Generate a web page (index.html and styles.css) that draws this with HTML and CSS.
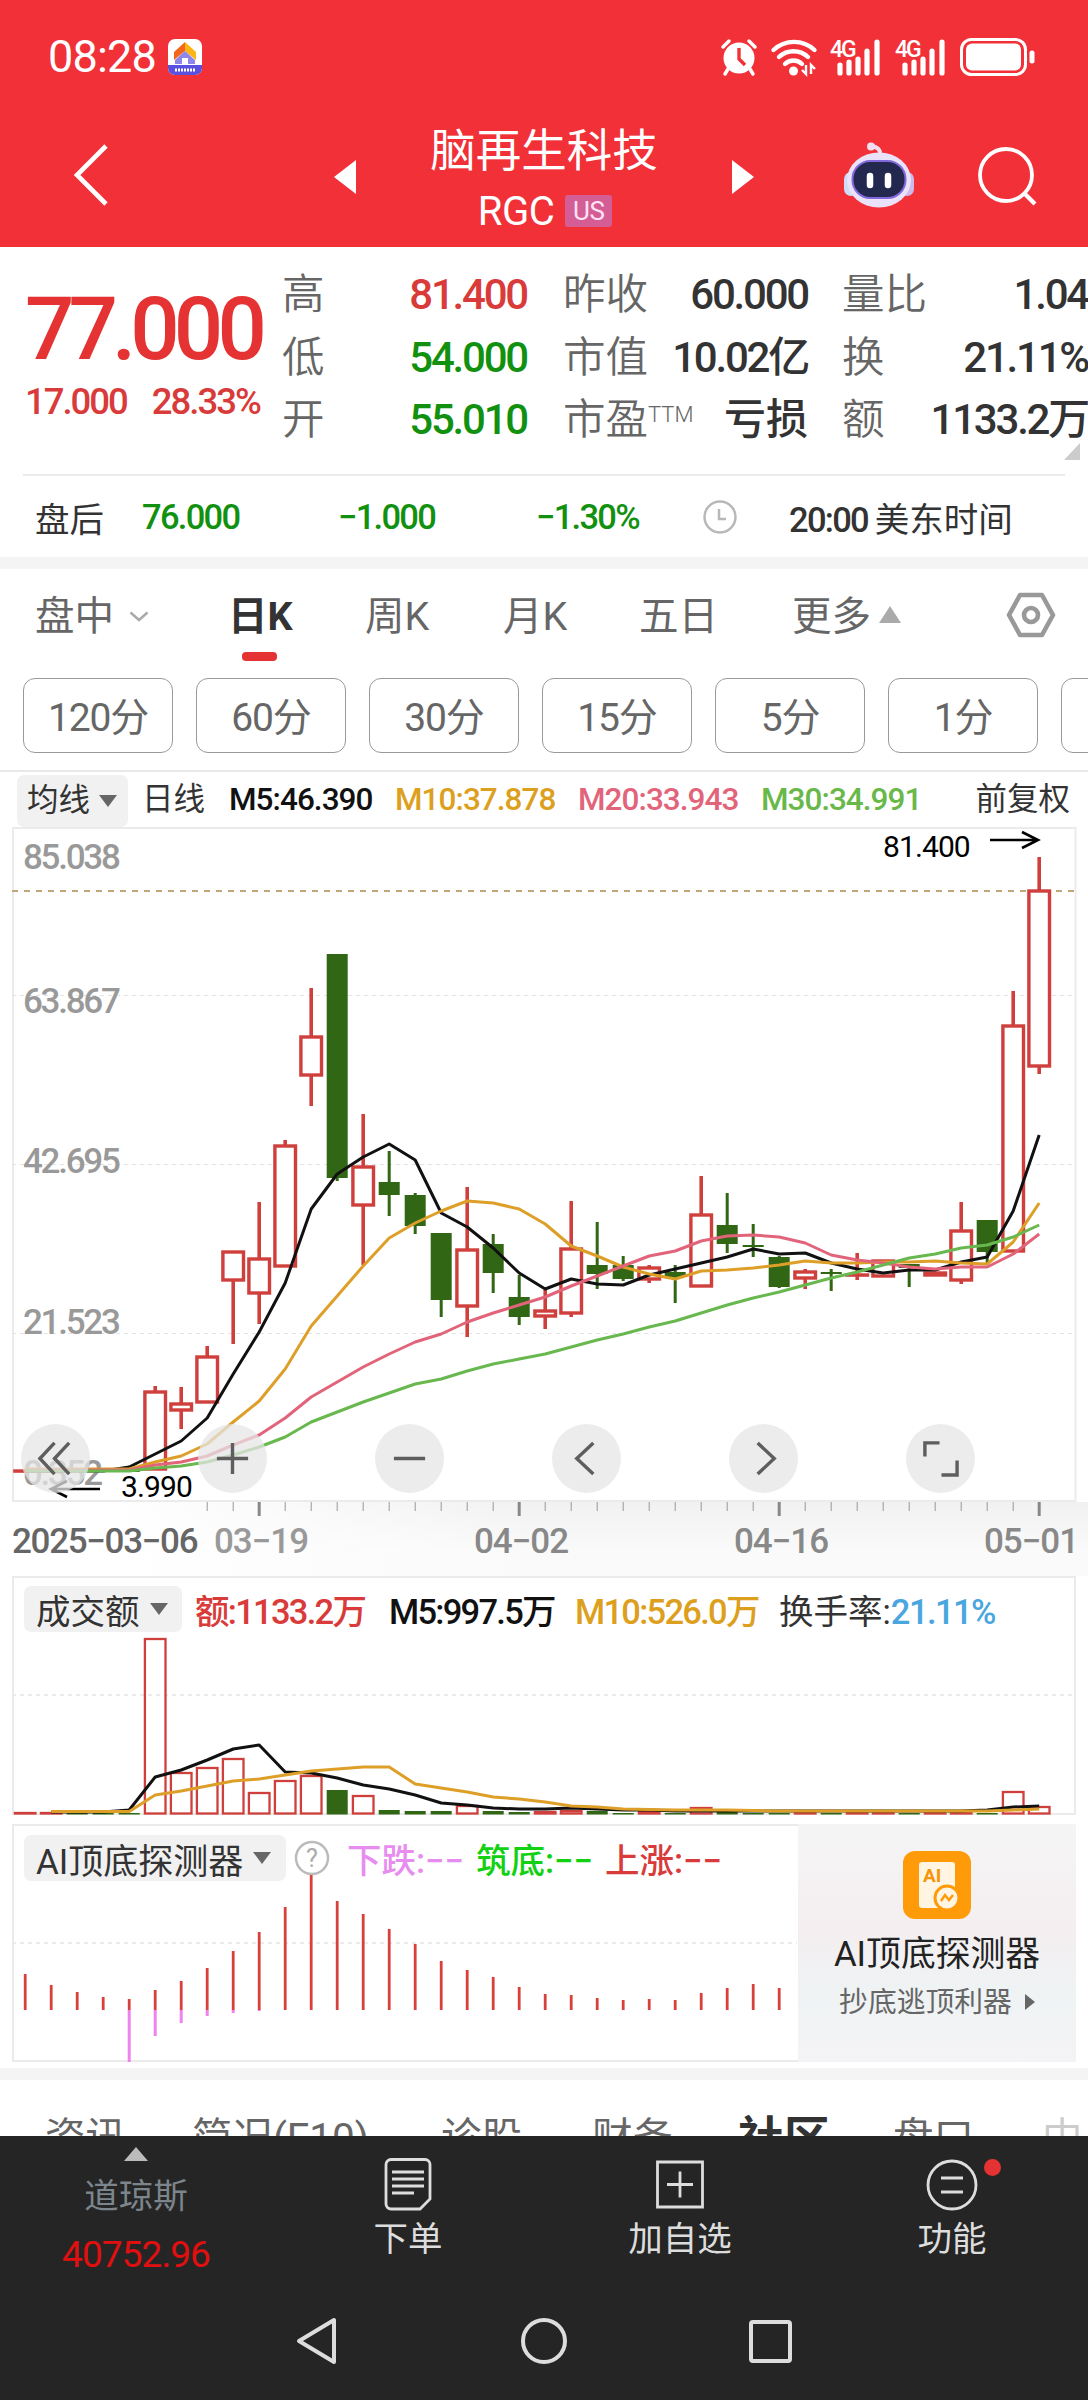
FILE: index.html
```
<!DOCTYPE html>
<html lang="zh-CN">

<head>
    <meta charset="UTF-8">
    <meta name="viewport" content="width=device-width, initial-scale=1.0">
    <title>脑再生科技 RGC</title>
    <link rel="stylesheet" href="styles.css">
</head>

<body>
    <div class="phone">
        <header class="header">
            <div class="status">
                <span class="time">08:28</span>
                <svg class="app-icon" width="34" height="36" viewBox="0 0 34 36">
                    <rect width="34" height="36" rx="7" fill="#fff"/>
                    <path d="M0 26h34v3a7 7 0 0 1-7 7H7a7 7 0 0 1-7-7z" fill="#5a50e0"/>
                    <path d="M6 13 17 3v9L6 21z" fill="#f4661b"/>
                    <path d="M17 3l11 10v8l-11-9z" fill="#fdb515"/>
                    <path d="M7 21l10-9 10 9v4h-7v-5h-6v5H7z" fill="#8f86ea"/>
                    <path d="M14 25v-6h6v6" fill="#fff"/>
                    <path d="M7 31h20" stroke="#fff" stroke-width="3" stroke-dasharray="2 1"/>
                </svg>
                <div class="status-icons">
                    <svg width="38" height="38" viewBox="0 0 38 38">
                        <circle cx="19" cy="20" r="15.5" fill="#fff"/>
                        <path d="M19 10v11l6 6" fill="none" stroke="#f13038" stroke-width="3.4"/>
                        <path d="M3 9l6-6M35 9l-6-6M8 31l-3 5M30 31l3 5" stroke="#fff" stroke-width="3.5" stroke-linecap="round"/>
                    </svg>
                    <svg width="46" height="38" viewBox="0 0 46 38">
                        <g fill="none" stroke="#fff" stroke-width="4.4" stroke-linecap="round">
                            <path d="M2.5 12a30 30 0 0 1 41 0"/>
                            <path d="M8 19a21 21 0 0 1 29 0"/>
                            <path d="M14 26a12 12 0 0 1 17 0"/>
                        </g>
                        <circle cx="22.5" cy="33" r="4.5" fill="#fff"/>
                        <path d="M35 27v9l-4-4M40 36v-9l4 4" fill="none" stroke="#fff" stroke-width="2.4"/>
                    </svg>
                    <svg class="signal" width="52" height="38" viewBox="0 0 52 38">
                        <text x="0" y="19">4G</text>
                        <path d="M10 35v-8M19 35V24M28 35V21M37 35V13M47 35V4" stroke="#fff" stroke-width="5.2" stroke-linecap="round"/>
                    </svg>
                    <svg class="signal" width="52" height="38" viewBox="0 0 52 38">
                        <text x="0" y="19">4G</text>
                        <path d="M10 35v-8M19 35V24M28 35V21M37 35V13M47 35V4" stroke="#fff" stroke-width="5.2" stroke-linecap="round"/>
                    </svg>
                    <svg width="76" height="38" viewBox="0 0 76 38">
                        <rect x="1.5" y="1.5" width="64" height="35" rx="10" fill="none" stroke="#fff" stroke-width="3"/>
                        <rect x="6" y="5.5" width="55" height="27" rx="6" fill="#fff"/>
                        <path d="M72 15v8" stroke="#fff" stroke-width="5" stroke-linecap="round"/>
                    </svg>
                </div>
            </div>
            <div class="title-bar">
                <svg class="back" width="34" height="62" viewBox="0 0 34 62">
                    <path d="M32 2 3 31l29 29" fill="none" stroke="#fff" stroke-width="4.6"/>
                </svg>
                <svg class="prev" width="22" height="34"><path d="M22 0v34L0 17z" fill="#fff"/></svg>
                <div class="stock">
                    <div class="stock-name">脑再生科技</div>
                    <div class="stock-code">RGC<span class="market">US</span></div>
                </div>
                <svg class="next" width="22" height="34"><path d="M0 0v34l22-17z" fill="#fff"/></svg>
                <svg class="robot" width="70" height="66" viewBox="0 0 70 66">
                    <path d="M36 14c1-6-2-9-9-10" fill="none" stroke="#f1dff0" stroke-width="4"/>
                    <circle cx="27" cy="4.5" r="4" fill="#f1dff0"/>
                    <rect x="0" y="30" width="14" height="24" rx="7" fill="#cfdcf8"/>
                    <rect x="56" y="30" width="14" height="24" rx="7" fill="#cdb9ea"/>
                    <ellipse cx="35" cy="38" rx="32" ry="27.5" fill="#e9e2f8"/>
                    <rect x="8.5" y="19" width="53" height="37" rx="18" fill="#23284f" stroke="#8268dc" stroke-width="2"/>
                    <path d="M26 34v9M44 34v9" stroke="#fff" stroke-width="6.5" stroke-linecap="round"/>
                </svg>
                <svg class="search" width="60" height="60" viewBox="0 0 60 60">
                    <circle cx="28" cy="28" r="26" fill="none" stroke="#fff" stroke-width="3.8"/>
                    <path d="M46 46l11 11" stroke="#fff" stroke-width="4.2"/>
                </svg>
            </div>
        </header>

        <section class="quote">
            <div class="price">
                <div class="price-now">77.000</div>
                <div class="price-change"><span>17.000</span><span>28.33%</span></div>
            </div>
            <dl class="facts">
                <dt>高</dt><dd class="up">81.400</dd>
                <dt>昨收</dt><dd>60.000</dd>
                <dt>量比</dt><dd>1.04</dd>
                <dt>低</dt><dd class="down">54.000</dd>
                <dt>市值</dt><dd>10.02亿</dd>
                <dt>换</dt><dd>21.11%</dd>
                <dt>开</dt><dd class="down">55.010</dd>
                <dt>市盈<sup>TTM</sup></dt><dd class="loss">亏损</dd>
                <dt>额</dt><dd>1133.2万</dd>
            </dl>
            <i class="corner"></i>
        </section>

        <section class="after">
            <span class="cjk">盘后</span>
            <span class="down">76.000</span>
            <span class="down">−1.000</span>
            <span class="down">−1.30%</span>
            <svg width="34" height="34" viewBox="0 0 34 34" fill="none" stroke="#b8b8b8" stroke-width="2.5">
                <circle cx="17" cy="17" r="15.5"/>
                <path d="M16 9v10h7"/>
            </svg>
            <span>20:00 <span class="cjk">美东时间</span></span>
        </section>
        <div class="band"></div>

        <nav class="tabs">
            <span>盘中<svg class="chev" width="20" height="11" viewBox="0 0 20 11"><path d="M1.5 1.5 10 9l8.5-7.5" fill="none" stroke="#aaa" stroke-width="2.5"/></svg></span>
            <span class="active">日K</span>
            <span>周K</span>
            <span>月K</span>
            <span>五日</span>
            <span>更多<svg class="more" width="22" height="17"><path d="M11 0l11 17H0z" fill="#aaa"/></svg></span>
            <svg width="50" height="46" viewBox="0 0 50 46" fill="none" stroke="#999" stroke-width="4.6">
                <path d="M14 3h22l11 20-11 20H14L3 23z" stroke-linejoin="round"/>
                <circle cx="25" cy="23" r="7"/>
            </svg>
        </nav>
        <div class="periods">
            <button>120分</button>
            <button>60分</button>
            <button>30分</button>
            <button>15分</button>
            <button>5分</button>
            <button>1分</button>
            <button></button>
        </div>

        <div class="ma-row">
            <span class="select">均线<i></i></span>
            <span class="ma-day">日线</span>
            <span class="black">M5:46.390</span>
            <span class="gold">M10:37.878</span>
            <span class="pink">M20:33.943</span>
            <span class="green">M30:34.991</span>
            <span class="adjust">前复权</span>
        </div>

        <div class="kline">
            <svg id="kline" width="1088" height="675" viewBox="0 827 1088 675"></svg>
            <div class="tools">
                <button><svg viewBox="0 0 40 40"><path d="M19 4 4 20l15 16M34 4 19 20l15 16"/></svg></button>
                <button><svg viewBox="0 0 40 40"><path d="M4 20h32M20 4v32"/></svg></button>
                <button><svg viewBox="0 0 40 40"><path d="M4 20h32"/></svg></button>
                <button><svg viewBox="0 0 40 40"><path d="M27 4 10 20l17 16"/></svg></button>
                <button><svg viewBox="0 0 40 40"><path d="M14 4l17 16-17 16"/></svg></button>
                <button><svg viewBox="0 0 40 40"><path d="M4 18V4h15M21 37h16V22"/></svg></button>
            </div>
        </div>
        <svg id="axis" class="axis" width="1088" height="74" viewBox="0 1502 1088 74"></svg>

        <section class="panel volume">
            <div class="panel-head">
                <span class="select">成交额<i></i></span>
                <span class="red">额:1133.2万</span>
                <span class="black">M5:997.5万</span>
                <span class="gold">M10:526.0万</span>
                <span class="turnover">换手率:<span class="blue">21.11%</span></span>
            </div>
            <svg id="volume" width="1064" height="178" viewBox="12 1637 1064 178"></svg>
        </section>

        <section class="panel detector">
            <div class="detector-main">
                <div class="panel-head">
                    <span class="select">AI顶底探测器<i></i></span>
                    <svg class="help" width="36" height="36" viewBox="0 0 36 36">
                        <circle cx="18" cy="18" r="16" fill="none" stroke="#bbb" stroke-width="2.5"/>
                        <text x="18" y="27" text-anchor="middle">?</text>
                    </svg>
                    <span class="magenta">下跌:−−</span>
                    <span class="lime">筑底:−−</span>
                    <span class="red">上涨:−−</span>
                </div>
                <svg id="detector" width="785" height="176" viewBox="12 1885 785 176"></svg>
            </div>
            <div class="promo">
                <svg width="68" height="68" viewBox="0 0 68 68">
                    <rect width="68" height="68" rx="12" fill="#ff9a08"/>
                    <path d="M19 11h30a3 3 0 0 1 3 3v43H19a3 3 0 0 1-3-3V14a3 3 0 0 1 3-3z" fill="#fff5e2"/>
                    <text x="20" y="31">AI</text>
                    <circle cx="44" cy="47" r="12" fill="#fff5e2" stroke="#ff9a08" stroke-width="3"/>
                    <path d="M38 50l4-6 4 5 4-5" fill="none" stroke="#ff9a08" stroke-width="2.5"/>
                </svg>
                <div class="promo-title">AI顶底探测器</div>
                <div class="promo-sub">抄底逃顶利器<i></i></div>
            </div>
        </section>
        <div class="band"></div>

        <nav class="info-tabs">
            <span>资讯</span>
            <span>简况(F10)</span>
            <span>诊股</span>
            <span>财务</span>
            <span class="active">社区</span>
            <span>盘口</span>
            <span class="faded">中</span>
        </nav>

        <footer class="bottom">
            <div class="index">
                <svg width="24" height="14"><path d="M12 0l12 14H0z" fill="#bbb"/></svg>
                <div class="index-name">道琼斯</div>
                <div class="index-value">40752.96</div>
            </div>
            <div class="action">
                <svg width="56" height="56" viewBox="0 0 56 56">
                    <path d="M11 3.5h34a5 5 0 0 1 5 5V43L40 53H11a5 5 0 0 1-5-5V8.5a5 5 0 0 1 5-5z"/>
                    <path d="M12 16h32M12 23h32M12 30h32M12 37h22"/>
                </svg>
                <div>下单</div>
            </div>
            <div class="action">
                <svg width="56" height="56" viewBox="0 0 56 56">
                    <path d="M5.5 6h45v45h-45zM15 28.5h26M28 15.5v26"/>
                </svg>
                <div>加自选</div>
            </div>
            <div class="action">
                <svg width="56" height="56" viewBox="0 0 56 56">
                    <circle cx="28" cy="29" r="24"/>
                    <path d="M17 22h22M17 36h22"/>
                </svg>
                <div>功能</div>
                <i class="dot"></i>
            </div>
        </footer>
        <div class="sys-nav">
            <svg width="48" height="48" viewBox="0 0 48 48"><path d="M40 3v42L5 24z"/></svg>
            <svg width="48" height="48" viewBox="0 0 48 48"><circle cx="24" cy="24" r="21"/></svg>
            <svg width="48" height="48" viewBox="0 0 48 48"><rect x="5" y="5" width="39" height="39" rx="2"/></svg>
        </div>
    </div>

    <script>
        const $ = s => document.querySelector(s)
        const x = i => 25.2 + i * 26

        // 最高, 实体上, 实体下, 最低, 涨(1)/跌(0)
        const candles = [
            [1470, 1471, 1471, 1472, 1], [1470, 1471, 1471, 1472, 1], [1470, 1470, 1471, 1472, 0],
            [1470, 1470, 1471, 1472, 0], [1470, 1470, 1472, 1472, 0],
            [1386, 1392, 1469, 1469, 1], [1387, 1404, 1410, 1429, 1], [1346, 1357, 1402, 1402, 1],
            [1252, 1252, 1280, 1344, 1], [1202, 1259, 1293, 1324, 1], [1140, 1146, 1266, 1266, 1],
            [988, 1037, 1075, 1106, 1], [954, 954, 1178, 1181, 0], [1114, 1167, 1205, 1265, 1],
            [1151, 1182, 1195, 1216, 0], [1193, 1195, 1226, 1234, 0], [1233, 1233, 1300, 1317, 0],
            [1187, 1250, 1306, 1337, 1], [1234, 1244, 1273, 1293, 0], [1275, 1297, 1317, 1325, 0],
            [1290, 1311, 1316, 1329, 1], [1201, 1249, 1313, 1317, 1], [1222, 1265, 1274, 1289, 0],
            [1256, 1265, 1279, 1281, 0], [1265, 1268, 1279, 1283, 1], [1265, 1272, 1277, 1303, 0],
            [1176, 1215, 1286, 1286, 1], [1193, 1225, 1244, 1253, 0], [1224, 1245, 1247, 1257, 0],
            [1256, 1257, 1287, 1288, 0], [1269, 1272, 1278, 1289, 1], [1269, 1272, 1274, 1291, 0],
            [1253, 1275, 1275, 1280, 1], [1261, 1261, 1276, 1276, 1], [1264, 1264, 1268, 1287, 0],
            [1272, 1273, 1275, 1275, 1], [1202, 1231, 1280, 1284, 1], [1220, 1220, 1252, 1263, 0],
            [991, 1026, 1251, 1251, 1], [857, 891, 1066, 1074, 1]
        ]
        const ma5 = [1471, 1471, 1471, 1471, 1467, 1454, 1441, 1418, 1374, 1332, 1283, 1209, 1174, 1157, 1144, 1160, 1213, 1227, 1248, 1273, 1289, 1279, 1284, 1285, 1275, 1269, 1263, 1257, 1249, 1254, 1253, 1263, 1269, 1273, 1270, 1270, 1262, 1257, 1211, 1135]
        const ma10 = [1469, 1469, 1469, 1469, 1469, 1462, 1456, 1444, 1422, 1401, 1369, 1326, 1296, 1266, 1238, 1223, 1211, 1201, 1203, 1209, 1224, 1246, 1256, 1267, 1274, 1279, 1271, 1270, 1268, 1265, 1261, 1263, 1263, 1262, 1262, 1261, 1263, 1264, 1242, 1203]
        const ma20 = [1470, 1470, 1470, 1470, 1470, 1465, 1462, 1456, 1445, 1435, 1418, 1397, 1382, 1367, 1354, 1342, 1334, 1322, 1313, 1305, 1297, 1286, 1276, 1266, 1256, 1251, 1241, 1236, 1235, 1237, 1243, 1255, 1260, 1263, 1267, 1269, 1267, 1267, 1254, 1234]
        const ma30 = [1471, 1471, 1471, 1471, 1471, 1468, 1466, 1462, 1455, 1447, 1437, 1422, 1412, 1402, 1393, 1384, 1379, 1371, 1364, 1359, 1354, 1347, 1340, 1334, 1327, 1321, 1313, 1305, 1298, 1292, 1285, 1278, 1272, 1265, 1258, 1254, 1248, 1245, 1237, 1225]

        const line = (points, cls, from = 0) =>
            `<polyline class="line ${cls}" points="${points.map((y, i) => x(i + from) + ',' + y).join(' ')}"/>`
        const hline = (y, cls, x1 = 12, x2 = 1076) => `<path class="${cls}" d="M${x1} ${y}H${x2}"/>`
        const candle = ([high, top, bottom, low, up], i) => up
            ? `<path class="wick-up" d="M${x(i)} ${high}V${top}M${x(i)} ${bottom}V${low}"/>
               <rect class="body-up" x="${x(i) - 10.3}" y="${top}" width="20.6" height="${bottom - top || .1}"/>`
            : `<path class="wick-down" d="M${x(i)} ${high}V${low}"/>
               <rect class="body-down" x="${x(i) - 10.5}" y="${top}" width="21" height="${bottom - top}"/>`

        $('#kline').innerHTML = `
            <rect class="frame" x="13" y="828" width="1062.5" height="673"/>
            ${hline(995.5, 'grid')}${hline(1164.5, 'grid')}${hline(1333.5, 'grid')}
            ${[[869, '85.038'], [1013, '63.867'], [1173, '42.695'], [1334, '21.523'], [1485, '0.352']]
                .map(([y, t]) => `<text class="scale" x="23" y="${y}">${t}</text>`).join('')}
            ${hline(891, 'last-price')}
            ${candles.map(candle).join('')}
            ${line(ma5, 'l-black')}${line(ma10, 'l-gold')}${line(ma20, 'l-pink')}${line(ma30, 'l-green')}
            <text class="mark" x="883" y="857">81.400</text>
            <path class="arrow" d="M990 840h48M1022 832l16 8-16 8"/>
            <text class="mark" x="121" y="1497">3.990</text>
            <path class="arrow" d="M100 1489H52M67 1481l-16 8 16 8"/>`

        // 日期轴
        let ticks = ''
        for (let i = 7; i < 40; i++) {
            ticks += i % 10 === 9
                ? `<path d="M${x(i)} 1502v14" stroke="#888" stroke-width="3"/>`
                : `<path d="M${x(i)} 1502v9" stroke="#999" stroke-width="1"/>`
        }
        $('#axis').innerHTML = ticks + [[12, '2025−03−06', 'first'], [214, '03−19', 'fading'], [474, '04−02', ''], [734, '04−16', ''], [984, '05−01', '']]
            .map(([left, t, cls]) => `<text class="date ${cls}" x="${left}" y="1553">${t}</text>`).join('')

        // 成交额
        const vol = [1813, 1813, 1813, 1813, 1813, 1639, 1773, 1768, 1759, 1793, 1781, 1776, 1790, 1796, 1810, 1811, 1811, 1806, 1811, 1812, 1812, 1811, 1811, 1813, 1812, 1813, 1808, 1812, 1813, 1813, 1813, 1813, 1813, 1813, 1813, 1813, 1813, 1813, 1792, 1807]
        const vol5 = [1812, 1812, 1812, 1810, 1777, 1770, 1760, 1749, 1745, 1772, 1773, 1778, 1785, 1789, 1795, 1803, 1805, 1808, 1809, 1809, 1808, 1809, 1810, 1810, 1811, 1811, 1811, 1811, 1811, 1811, 1811, 1811, 1811, 1811, 1811, 1811, 1810, 1807, 1806]
        const vol10 = [1811.5, 1811.5, 1811.5, 1811.5, 1795, 1791, 1786, 1781, 1779, 1775, 1771, 1769, 1767, 1767, 1784, 1788, 1792, 1797, 1799, 1802, 1806, 1807, 1809, 1809.5, 1810, 1810, 1810, 1810.5, 1811, 1811, 1811, 1811, 1811, 1811, 1811, 1811, 1811, 1810, 1809]
        $('#volume').innerHTML = hline(1695, 'grid thick') +
            vol.map((y, i) => candles[i][4]
                ? `<rect class="vol-up" x="${x(i) - 10.3}" y="${y}" width="20.6" height="${1813.5 - y}"/>`
                : `<rect class="body-down" x="${x(i) - 10.5}" y="${y}" width="21" height="${1814.5 - y}"/>`).join('') +
            line(vol5, 'l-black', 1) + line(vol10, 'l-gold', 1)

        // AI顶底探测器
        const rise = [1974, 1985, 1992, 1997, 1999, 1990, 1981, 1968, 1951, 1932, 1907, 1875, 1901, 1914, 1929, 1944, 1961, 1970, 1977, 1987, 1994, 1995, 1998, 2000, 1999, 2000, 1993, 1988, 1984, 1988]
        const fall = { 4: 2062, 5: 2036, 6: 2023, 7: 2016, 8: 2013, 9: 2011 }
        $('#detector').innerHTML = hline(1943, 'grid thick', 12, 797) +
            rise.map((y, i) => `<path class="rise" d="M${x(i)} 2010V${y}"/>`).join('') +
            Object.keys(fall).map(i => `<path class="fall" d="M${x(+i)} 2010V${fall[i]}"/>`).join('')
    </script>
</body>

</html>
```
FILE: styles.css
```
* {
    box-sizing: border-box;
}
body {
    margin: 0;
    font-family: Roboto, "Noto Sans CJK SC", sans-serif;
    color: #333;
    background: #fff;
}
svg {
    display: block;
    flex: none;
    overflow: visible;
}
button {
    font: inherit;
    padding: 0;
    background: none;
    border: none;
}
.phone {
    width: 1088px;
    height: 2400px;
    overflow: hidden;
}

.up, .red { color: #d93a3a; }
.down { color: #11910f; }
.black { color: #111; }
.gold { color: #dd9f1e; }
.pink { color: #e2647a; }
.green { color: #68b84a; }
.blue { color: #4aa6df; }
.magenta { color: #e88df0; }
.lime { color: #12d112; }

/* header */
.header {
    height: 247px;
    background: #f13038;
    color: #fff;
}
.status {
    display: flex;
    align-items: center;
    height: 113px;
    padding: 0 52px 0 48px;
}
.time {
    width: 120px;
    font-size: 45px;
    letter-spacing: -0.8px;
}
.status-icons {
    display: flex;
    align-items: center;
    gap: 13px;
    margin-left: auto;
}
.signal text {
    font-size: 23px;
    font-weight: 500;
    letter-spacing: -2px;
    fill: #fff;
}
.title-bar {
    display: flex;
    height: 134px;
    padding-left: 74px;
}
.back { margin-top: 31px; }
.prev { margin: 47px 0 0 226px; }
.stock {
    width: 376px;
    padding-top: 13px;
    text-align: center;
}
.stock-name {
    height: 63px;
    line-height: 52px;
    font-size: 45.5px;
}
.stock-code {
    display: flex;
    align-items: center;
    justify-content: center;
    height: 44px;
    padding-left: 2px;
    font-size: 40px;
    letter-spacing: -0.5px;
}
.market {
    width: 47px;
    height: 32px;
    margin-left: 11px;
    line-height: 33px;
    font-size: 26px;
    background: #d45d96;
    color: #ffe3f2;
    border-radius: 3px;
}
.next { margin-top: 47px; }
.robot { margin: 29px 0 0 90px; }
.search { margin: 34px 0 0 64px; }

/* quote */
.quote {
    position: relative;
    display: flex;
    height: 229px;
    padding: 17px 0 0 25px;
}
.quote::after {
    content: '';
    position: absolute;
    left: 23px;
    right: 23px;
    bottom: 0;
    height: 2px;
    background: #ececec;
}
.price {
    width: 257px;
    color: #e53333;
}
.price-now {
    height: 104px;
    padding-top: 15px;
    line-height: 100px;
    font-size: 87px;
    font-weight: 500;
    letter-spacing: -0.068em;
}
.price-change {
    display: flex;
    gap: 25px;
    padding-top: 10px;
    line-height: 48px;
    font-size: 36.5px;
    font-weight: 500;
    letter-spacing: -0.055em;
    color: #d93a3a;
}
.facts {
    display: grid;
    grid-template-columns: 100px 145px 120px 161px 100px 180px;
    grid-auto-rows: 62.5px;
    width: 806px;
    margin: 0;
    line-height: 62px;
    font-size: 42px;
}
.facts dt {
    color: #666;
    font-size: 42.5px;
    font-weight: 350;
    white-space: nowrap;
}
.facts dt:nth-of-type(3n+2) { padding-left: 36px; }
.facts dt:nth-of-type(3n) { padding-left: 34px; }
.facts dd {
    margin: 0;
    text-align: right;
    font-weight: 500;
    letter-spacing: -0.053em;
    white-space: nowrap;
}
.facts .loss { letter-spacing: 0; }
.facts sup {
    font-size: 22px;
    line-height: 1;
    vertical-align: 12px;
}
.corner {
    position: absolute;
    right: 8px;
    bottom: 16px;
    border-left: 16px solid transparent;
    border-bottom: 17px solid #ccc;
}

.after {
    display: grid;
    grid-template-columns: 107px 196px 198px 167px 86px auto;
    align-items: center;
    height: 81px;
    padding-left: 35px;
    font-size: 34.5px;
    font-weight: 500;
    letter-spacing: -0.05em;
}
.after .cjk {
    font-weight: 400;
    font-size: 34.5px;
    letter-spacing: 0;
}
.band {
    height: 12px;
    background: #f4f4f4;
}

/* chart tabs */
.tabs {
    display: grid;
    grid-template-columns: 193px 137px 138px 136px 153px 214px auto;
    height: 94px;
    padding-left: 35px;
    line-height: 95px;
    font-size: 39.5px;
    color: #666;
}
.tabs span {
    position: relative;
}
.tabs .active {
    font-weight: 700;
    color: #333;
}
.tabs .active::after {
    content: '';
    position: absolute;
    left: 14px;
    top: 83px;
    width: 35px;
    height: 9px;
    border-radius: 4px;
    background: #e53333;
}
.tabs > svg { margin-top: 23px; }
.chev, .more { display: inline-block; }
.chev { margin: 0 0 8px 15px; }
.more { margin: 0 0 7px 8px; }

.periods {
    display: flex;
    gap: 23px;
    height: 109px;
    padding: 15px 0 0 23px;
    border-bottom: 2px solid #e8e8e8;
    overflow: hidden;
}
.periods button {
    flex: none;
    width: 150px;
    height: 75px;
    padding-bottom: 4px;
    border: 1.5px solid #999;
    border-radius: 12px;
    font-size: 39px;
    letter-spacing: -0.03em;
    color: #666;
}

.ma-row {
    display: flex;
    height: 55px;
    padding: 3px 0 0 17px;
    line-height: 50px;
    font-size: 31.5px;
    font-weight: 500;
    letter-spacing: -0.03em;
    white-space: nowrap;
}
.ma-row .black { width: 166px; }
.ma-row .gold { width: 183px; }
.ma-row .pink { width: 183px; }
.ma-row .select { width: 111px; }
.ma-day { width: 87px; margin-left: 14px; }
.ma-row .select, .ma-day, .adjust {
    font-weight: 400;
    letter-spacing: 0;
}
.adjust { margin-left: auto; padding-right: 18px; }
.select {
    display: flex;
    align-items: center;
    gap: 9px;
    padding-left: 10px;
    background: #f1f1f1;
    border-radius: 7px;
}
.select i {
    border: 9px solid transparent;
    border-top: 12px solid #666;
    border-bottom: 0;
}

/* k-line */
.kline { position: relative; }
.frame {
    fill: none;
    stroke: #ebebeb;
    stroke-width: 2;
}
.grid {
    stroke: #e3e3e3;
    stroke-width: 1.2;
    stroke-dasharray: 4 4;
}
.grid.thick { stroke-width: 2; stroke: #ebebeb; }
.last-price {
    stroke: #c1a67c;
    stroke-width: 2;
    stroke-dasharray: 6 6;
}
.scale, .date {
    font-size: 35px;
    font-weight: 500;
    fill: #999;
    letter-spacing: -0.065em;
}
.mark {
    font-size: 30px;
    letter-spacing: -0.03em;
    fill: #000;
}
.arrow {
    fill: none;
    stroke: #000;
    stroke-width: 2.6;
}
.wick-up {
    stroke: #cf3f3c;
    stroke-width: 3.6;
}
.body-up {
    fill: #fff;
    stroke: #cf3f3c;
    stroke-width: 3.4;
}
.vol-up {
    fill: none;
    stroke: #cf3f3c;
    stroke-width: 2.3;
}
.wick-down {
    stroke: #306614;
    stroke-width: 3;
}
.body-down { fill: #306614; }
.line {
    fill: none;
    stroke-width: 3;
    stroke-linejoin: round;
}
.l-black { stroke: #111; }
.l-gold { stroke: #dd9f28; }
.l-pink { stroke: #e2647a; }
.l-green { stroke: #68b84f; }

.tools {
    position: absolute;
    left: 21px;
    bottom: 9px;
    display: flex;
    gap: 108px;
}
.tools button {
    display: flex;
    align-items: center;
    justify-content: center;
    width: 69px;
    height: 69px;
    border-radius: 50%;
    background: rgba(230, 230, 230, 0.75);
}
.tools svg {
    width: 39px;
    height: 39px;
    fill: none;
    stroke: #5e5e5e;
    stroke-width: 3.5;
}

.axis { background: linear-gradient(to right, #fff 10%, rgba(255, 255, 255, 0) 50%), linear-gradient(#f1f1f1, #fafafa 65%); }
.date { fill: #888; letter-spacing: -0.03em; }
.date.first { fill: #666; letter-spacing: -0.038em; }
.date.fading { fill: #999; }

/* lower panels */
.panel {
    width: 1064px;
    margin-left: 12px;
    box-shadow: inset 0 0 0 2px #ebebeb;
}
.panel-head {
    display: flex;
    align-items: center;
    height: 60px;
    padding: 0 0 2px 12px;
    font-size: 34.5px;
    white-space: nowrap;
}
.panel-head .select { height: 46px; padding-left: 12px; gap: 10px; }
.volume {
    height: 239px;
}
.volume .panel-head {
    height: 61px;
    padding-top: 7px;
    padding-bottom: 2px;
}
.volume .panel-head > span {
    font-weight: 500;
    letter-spacing: -0.05em;
}
.volume .panel-head .select {
    width: 158px;
    margin-right: 13px;
    font-weight: 400;
    letter-spacing: 0;
}
.volume .red { width: 194px; }
.volume .black { width: 186px; }
.volume .gold { width: 204px; }
.volume .panel-head .turnover { font-weight: 400; letter-spacing: 0; }
.turnover .blue { font-weight: 500; letter-spacing: -0.045em; }

.detector {
    display: flex;
    height: 238px;
    margin-top: 9px;
    margin-bottom: 6px;
}
.detector-main { width: 786px; }
.detector .panel-head { height: 61px; padding-top: 8px; padding-bottom: 1px; }
.detector .select { width: 262px; font-size: 35px; gap: 10px; }
.help { margin: 0 17px 0 8px; }
.help text {
    font-size: 25px;
    fill: #aaa;
}
.detector .magenta, .detector .lime { width: 129px; }
.detector .panel-head > span:not(.select) { font-weight: 500; letter-spacing: 0; }
.rise {
    stroke: #d9403c;
    stroke-width: 2.8;
}
.fall {
    stroke: #ee82ee;
    stroke-width: 3;
}
.promo {
    display: flex;
    flex-direction: column;
    align-items: center;
    width: 278px;
    padding-top: 27px;
    background: linear-gradient(#f5f5f5, #f4eef0 45%, #eff3f4 70%, #f4f3f6);
}
.promo text {
    font-size: 19px;
    font-weight: 700;
    fill: #f5950c;
}
.promo-title {
    margin-top: 10px;
    line-height: 50px;
    font-size: 34.8px;
    color: #222;
}
.promo-sub {
    display: flex;
    align-items: center;
    gap: 13px;
    line-height: 46px;
    font-size: 28.8px;
    color: #666;
}
.promo-sub i {
    border: 8px solid transparent;
    border-left: 10px solid #666;
    border-right: 0;
}

.info-tabs {
    display: grid;
    grid-template-columns: 147px 249px 151px 146px 155px 149px auto;
    height: 56px;
    padding-left: 45px;
    overflow: hidden;
    line-height: 117px;
    font-size: 40.5px;
    color: #666;
}
.info-tabs .active {
    font-size: 46px;
    font-weight: 700;
    color: #333;
}
.info-tabs .faded { color: #ccc; }

/* bottom bar */
.bottom {
    display: flex;
    height: 150px;
    background: #252525;
    color: #ddd;
    text-align: center;
    font-size: 34.5px;
}
.bottom > div {
    position: relative;
    width: 272px;
}
.index svg { margin: 11px auto 0; }
.index-name {
    line-height: 50px;
    padding-top: 10px;
    color: #7c858b;
}
.index-value {
    margin-top: 8px;
    line-height: 52px;
    font-size: 37px;
    letter-spacing: -0.025em;
    color: #e01010;
}
.action svg {
    margin: 20px auto 0;
    fill: none;
    stroke: #ddd;
    stroke-width: 2.8;
}
.action div { line-height: 54px; }
.dot {
    position: absolute;
    left: 168px;
    top: 23px;
    width: 17px;
    height: 17px;
    border-radius: 50%;
    background: #e53333;
}
.sys-nav {
    display: flex;
    justify-content: center;
    gap: 178px;
    height: 114px;
    padding-top: 31px;
    background: #252525;
}
.sys-nav svg {
    fill: none;
    stroke: #ddd;
    stroke-width: 4;
    stroke-linejoin: round;
}
```
